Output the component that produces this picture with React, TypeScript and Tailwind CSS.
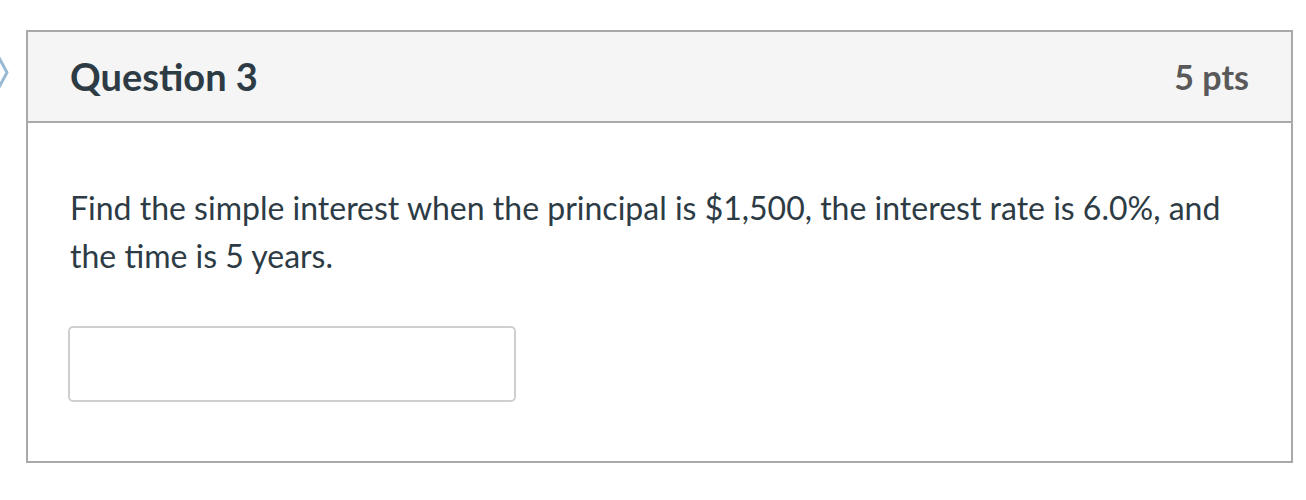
export default function App() {
  return (
    <div className="min-h-[500px] bg-white pt-[30px] pl-[26px] font-['Lato','Noto_Sans',sans-serif]">
      <div className="relative w-[1267px]">
        {/* flag marker peeking in from the left */}
        <svg
          className="absolute left-[-48px] top-[23px]"
          width="40"
          height="40"
          viewBox="0 0 40 40"
          fill="none"
        >
          <path
            d="M0 3 H20 L29 19.5 L20 36 H0"
            stroke="#9ab9d3"
            strokeWidth="3"
            strokeLinejoin="round"
          />
        </svg>

        <div className="border-2 border-[#a9a9a9]">
          <div className="flex h-[91px] items-center justify-between border-b-2 border-[#a9a9a9] bg-[#f5f5f5] px-[42px]">
            <h2 className="text-[38px] font-bold text-[#2d3b45]">Question 3</h2>
            <div className="text-[34px] font-bold text-[#595959]">5 pts</div>
          </div>

          <div className="px-[42px] pt-[61px] pb-[59px]">
            <p className="text-[32px] leading-[48px] text-[#2d3b45]">
              Find the simple interest when the principal is $1,500, the interest rate is 6.0%, and the time is 5 years.
            </p>
            <input
              type="text"
              aria-label="Answer"
              className="ml-[-2px] mt-[46px] block h-[76px] w-[448px] rounded-[5px] border-2 border-[#cfcfcf] bg-white px-3 text-[28px] outline-none"
            />
          </div>
        </div>
      </div>
    </div>
  );
}
